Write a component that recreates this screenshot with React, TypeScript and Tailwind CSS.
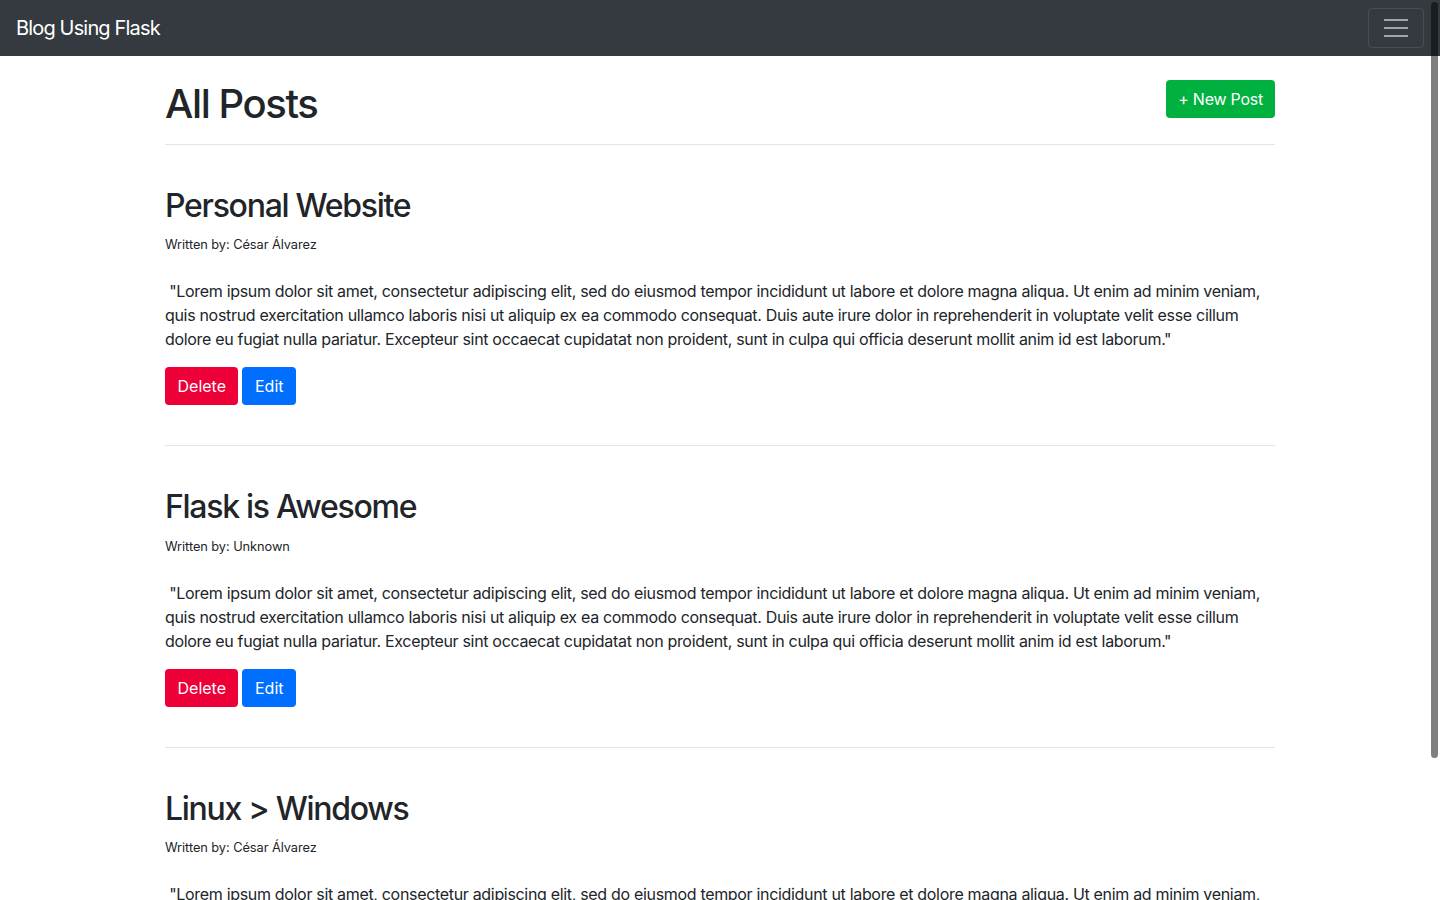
interface Post {
  id: number;
  title: string;
  author: string;
  content: string;
}

const LOREM =
  '\u00a0"Lorem ipsum dolor sit amet, consectetur adipiscing elit, sed do eiusmod tempor incididunt ut labore et dolore magna aliqua. Ut enim ad minim veniam, quis nostrud exercitation ullamco laboris nisi ut aliquip ex ea commodo consequat. Duis aute irure dolor in reprehenderit in voluptate velit esse cillum dolore eu fugiat nulla pariatur. Excepteur sint occaecat cupidatat non proident, sunt in culpa qui officia deserunt mollit anim id est laborum."';

const posts: Post[] = [
  { id: 1, title: 'Personal Website', author: 'César Álvarez', content: LOREM },
  { id: 2, title: 'Flask is Awesome', author: 'Unknown', content: LOREM },
  { id: 3, title: 'Linux > Windows', author: 'César Álvarez', content: LOREM },
];

function Navbar() {
  return (
    <nav className="h-14 bg-[#343a40] px-4 flex items-center justify-between">
      <a href="#" className="text-white text-[20px] leading-[30px] tracking-[-0.042em]">
        Blog Using Flask
      </a>
      <button className="w-14 h-10 flex items-center justify-center rounded border border-white/10">
        <svg width="30" height="30" viewBox="0 0 30 30">
          <path d="M3 7h24M3 15h24M3 23h24" stroke="rgba(255,255,255,0.55)" strokeWidth="2" />
        </svg>
      </button>
    </nav>
  );
}

function PostItem({ post }: { post: Post }) {
  return (
    <div className="pt-[26px]">
      <h2 className="text-[32px] leading-[38.4px] font-medium tracking-[-0.04em] mb-2">{post.title}</h2>
      <p className="text-[12.8px] leading-6 tracking-[-0.005em] mb-[22px]">Written by: {post.author}</p>
      <p className="text-base leading-6 tracking-[-0.02em] mb-4">{post.content}</p>
      <div className="flex gap-1 mb-10">
        <button className="h-[38px] px-[12.5px] rounded bg-[#ec0037] text-white text-base">Delete</button>
        <button className="h-[38px] px-[12.5px] rounded bg-[#006fff] text-white text-base">Edit</button>
      </div>
      <hr className="my-4 border-black/10" />
    </div>
  );
}

export default function App() {
  return (
    <div
      className="relative h-screen overflow-hidden bg-white text-[#212529]"
      style={{ fontFamily: 'Inter, "Noto Sans", "Liberation Sans", sans-serif' }}
    >
      <Navbar />
      <main className="w-[1110px] mx-auto pt-6">
        <div className="flex items-start justify-between">
          <h1 className="text-[40px] leading-[48px] font-medium tracking-[-0.035em]">All Posts</h1>
          <button className="h-[38px] px-3 rounded bg-[#00b13f] text-white text-base tracking-[-0.015em]">
            + New Post
          </button>
        </div>
        <hr className="my-4 border-black/10" />
        {posts.map((p) => (
          <PostItem key={p.id} post={p} />
        ))}
      </main>
      {/* overlay scrollbar thumb */}
      <div className="absolute right-[2px] top-[2px] w-[7px] h-[756px] rounded-full bg-black/50" />
    </div>
  );
}
